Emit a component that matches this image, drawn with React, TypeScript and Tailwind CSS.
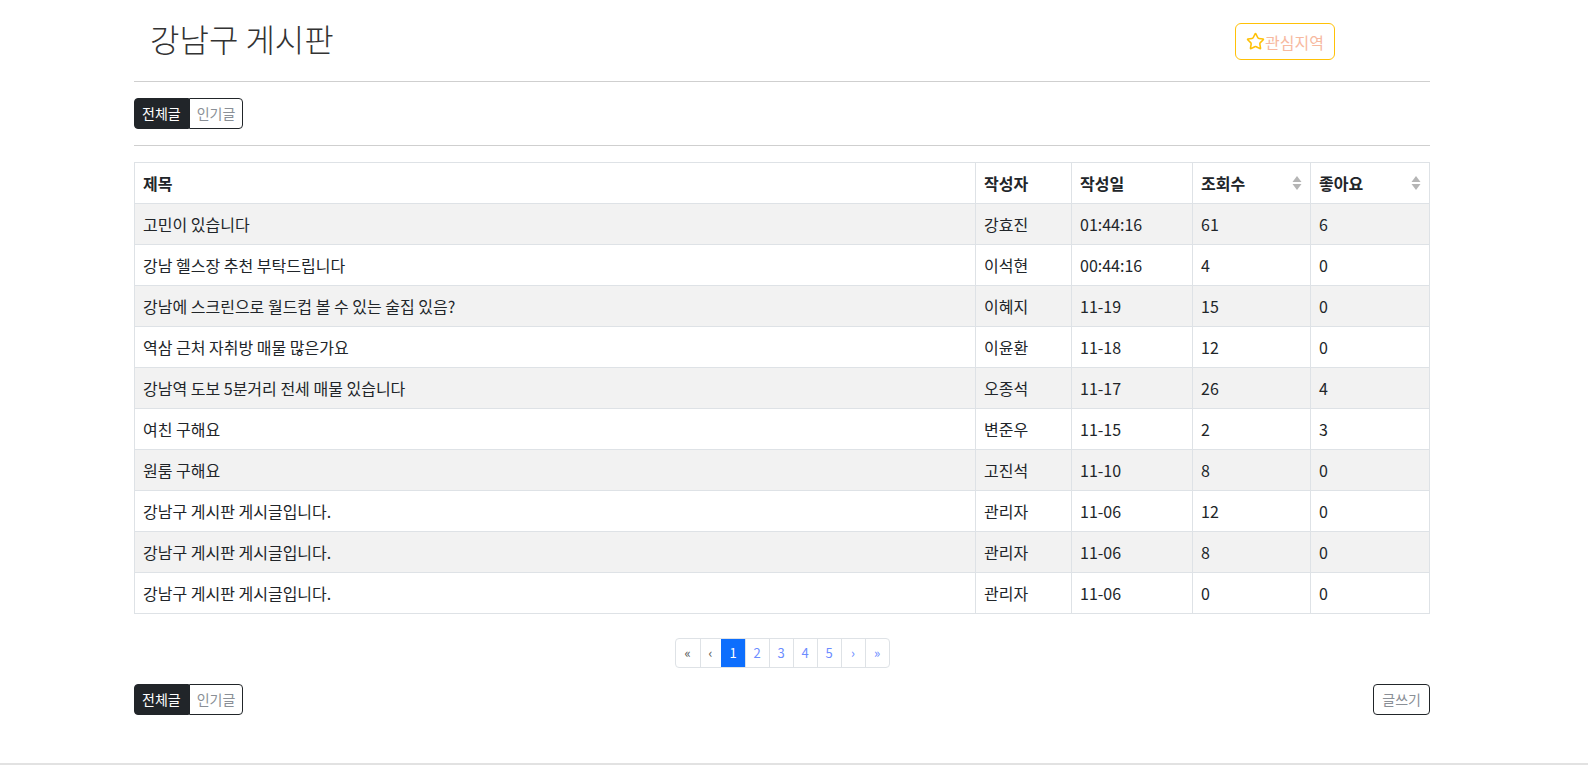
import { Star } from "lucide-react";

type Post = {
  title: string;
  author: string;
  date: string;
  views: number;
  likes: number;
};

const posts: Post[] = [
  { title: "고민이 있습니다", author: "강효진", date: "01:44:16", views: 61, likes: 6 },
  { title: "강남 헬스장 추천 부탁드립니다", author: "이석현", date: "00:44:16", views: 4, likes: 0 },
  { title: "강남에 스크린으로 월드컵 볼 수 있는 술집 있음?", author: "이혜지", date: "11-19", views: 15, likes: 0 },
  { title: "역삼 근처 자취방 매물 많은가요", author: "이윤환", date: "11-18", views: 12, likes: 0 },
  { title: "강남역 도보 5분거리 전세 매물 있습니다", author: "오종석", date: "11-17", views: 26, likes: 4 },
  { title: "여친 구해요", author: "변준우", date: "11-15", views: 2, likes: 3 },
  { title: "원룸 구해요", author: "고진석", date: "11-10", views: 8, likes: 0 },
  { title: "강남구 게시판 게시글입니다.", author: "관리자", date: "11-06", views: 12, likes: 0 },
  { title: "강남구 게시판 게시글입니다.", author: "관리자", date: "11-06", views: 8, likes: 0 },
  { title: "강남구 게시판 게시글입니다.", author: "관리자", date: "11-06", views: 0, likes: 0 },
];

function SortIcon() {
  return (
    <svg width="10" height="16" viewBox="0 0 10 16" className="fill-[#b5b5b5]">
      <path d="M5 1 L9.5 7 H0.5 Z" />
      <path d="M5 15 L9.5 9 H0.5 Z" />
    </svg>
  );
}

function Tabs() {
  return (
    <div className="flex">
      <button className="h-[31px] px-[7px] bg-[#212529] text-white text-[14px] rounded-l-[4px] border border-[#212529]">
        전체글
      </button>
      <button className="h-[31px] px-[7px] bg-white text-[#8a8f96] text-[14px] rounded-r-[4px] border border-[#212529]">
        인기글
      </button>
    </div>
  );
}

export default function App() {
  const font = { fontFamily: '"Noto Sans CJK KR", "Noto Sans", sans-serif' };
  const pages = ["«", "‹", "1", "2", "3", "4", "5", "›", "»"];

  return (
    <div className="min-h-[765px] bg-white text-[#212529] flex flex-col" style={font}>
      <div className="ml-[134px] w-[1296px] flex-1">
        <div className="flex items-start justify-between h-[82px] border-b border-[#cfcfcf]">
          <h1 className="ml-[16px] mt-[16px] text-[32px] font-light leading-[44px] text-[#333]">강남구 게시판</h1>
          <button className="mt-[23px] mr-[95px] h-[37px] px-[10px] flex items-center border border-[#ffc107] rounded-[6px] text-[#f7b9a0] text-[16px]">
            <Star size={19} strokeWidth={2} className="text-[#ffc107]" />
            관심지역
          </button>
        </div>

        <div className="pt-[16px] pb-[16px] border-b border-[#cfcfcf]">
          <Tabs />
        </div>

        <table className="mt-[16px] w-full border-collapse border border-[#dee2e6] text-[16px]">
          <thead>
            <tr className="h-[41px]">
              <th className="text-left font-semibold px-[8px] border border-[#dee2e6] w-[841px]">제목</th>
              <th className="text-left font-semibold px-[8px] border border-[#dee2e6] w-[96px]">작성자</th>
              <th className="text-left font-semibold px-[8px] border border-[#dee2e6] w-[121px]">작성일</th>
              <th className="text-left font-semibold px-[8px] border border-[#dee2e6] w-[118px]">
                <div className="flex items-center justify-between">
                  조회수
                  <SortIcon />
                </div>
              </th>
              <th className="text-left font-semibold px-[8px] border border-[#dee2e6]">
                <div className="flex items-center justify-between">
                  좋아요
                  <SortIcon />
                </div>
              </th>
            </tr>
          </thead>
          <tbody>
            {posts.map((p, i) => (
              <tr key={i} className={i % 2 === 0 ? "h-[41px] bg-[#f2f2f2]" : "h-[41px] bg-white"}>
                <td className="px-[8px] border border-[#dee2e6]">{p.title}</td>
                <td className="px-[8px] border border-[#dee2e6]">{p.author}</td>
                <td className="px-[8px] border border-[#dee2e6]">{p.date}</td>
                <td className="px-[8px] border border-[#dee2e6]">{p.views}</td>
                <td className="px-[8px] border border-[#dee2e6]">{p.likes}</td>
              </tr>
            ))}
          </tbody>
        </table>

        <div className="flex justify-center mt-[24px]">
          <div className="flex h-[30px] border border-[#dee2e6] rounded-[4px] overflow-hidden text-[13px]">
            {pages.map((p, i) => (
              <div
                key={i}
                className={
                  p === "1"
                    ? "w-[24px] flex items-center justify-center bg-[#0d6efd] text-white border-l border-[#0d6efd]"
                    : i === 0
                    ? "w-[24px] flex items-center justify-center text-[#555]"
                    : i === 1
                    ? "w-[21px] flex items-center justify-center text-[#555] border-l border-[#dee2e6]"
                    : "w-[24px] flex items-center justify-center text-[#6c8cff] border-l border-[#dee2e6]"
                }
              >
                {p}
              </div>
            ))}
          </div>
        </div>

        <div className="flex justify-between mt-[16px]">
          <Tabs />
          <button className="h-[31px] px-[8px] bg-white text-[#8a8f96] text-[14px] rounded-[4px] border border-[#212529]">
            글쓰기
          </button>
        </div>
      </div>
      <div className="h-[2px] bg-[#e2e2e2] mt-auto" />
    </div>
  );
}
